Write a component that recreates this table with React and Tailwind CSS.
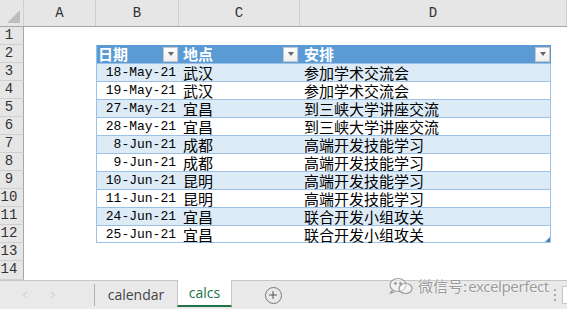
import { ChevronLeft, ChevronRight, Plus } from 'lucide-react'

const rows = [
  ['18-May-21', '武汉', '参加学术交流会'],
  ['19-May-21', '武汉', '参加学术交流会'],
  ['27-May-21', '宜昌', '到三峡大学讲座交流'],
  ['28-May-21', '宜昌', '到三峡大学讲座交流'],
  ['8-Jun-21', '成都', '高端开发技能学习'],
  ['9-Jun-21', '成都', '高端开发技能学习'],
  ['10-Jun-21', '昆明', '高端开发技能学习'],
  ['11-Jun-21', '昆明', '高端开发技能学习'],
  ['24-Jun-21', '宜昌', '联合开发小组攻关'],
  ['25-Jun-21', '宜昌', '联合开发小组攻关'],
]

const cjk = "font-['Noto_Sans_CJK_SC',sans-serif]"
const mono = "font-['Liberation_Mono','Noto_Sans_CJK_SC',monospace]"

function RowHead({ n }) {
  return (
    <div className={`w-[24px] shrink-0 h-full bg-[#e6e6e6] border-r border-r-[#a6a6a6] border-b border-b-[#cfcfcf] text-[14px] leading-[17px] text-[#333] text-center pr-[5px] ${mono}`}>
      {n}
    </div>
  )
}

function DropBtn() {
  return (
    <div className="w-[15px] h-[15px] border border-[#c8c8c8] bg-gradient-to-b from-white to-[#eeeeee] flex items-center justify-center shrink-0">
      <div className="w-0 h-0 border-l-[3px] border-r-[3px] border-t-[4px] border-l-transparent border-r-transparent border-t-[#666]" />
    </div>
  )
}

function Weixin() {
  return (
    <svg width="26" height="20" viewBox="0 0 26 20" fill="none" stroke="#9a9a9a" strokeWidth="1.2">
      <ellipse cx="10" cy="9" rx="8" ry="6.5" fill="#fff" fillOpacity="0.4" />
      <path d="M4.5 14.5 l-2.5 3 l4.5 -1.8" />
      <ellipse cx="17.5" cy="12.5" rx="6.5" ry="5" fill="#fff" fillOpacity="0.5" />
      <circle cx="7.5" cy="7.5" r="0.8" fill="#9a9a9a" />
      <circle cx="12.5" cy="7.5" r="0.8" fill="#9a9a9a" />
    </svg>
  )
}

export default function App() {
  return (
    <div className="w-[567px] h-[310px] bg-white overflow-hidden relative select-none">
      {/* Column headers */}
      <div className="flex h-[27px] bg-[#e6e6e6] border-b border-b-[#a6a6a6]">
        <div className="w-[24px] shrink-0 border-r border-r-[#cfcfcf] relative">
          <svg className="absolute right-[3px] bottom-[3px]" width="13" height="13"><polygon points="13,0 13,13 0,13" fill="#bdbdbd" /></svg>
        </div>
        {[['A', 'w-[72px]'], ['B', 'w-[83px]'], ['C', 'w-[121px]'], ['D', 'flex-1']].map(([l, w]) => (
          <div key={l} className={`${w} shrink-0 border-r border-r-[#cfcfcf] flex items-end justify-center pb-[2px] text-[14px] text-[#333] ${mono}`}>
            {l}
          </div>
        ))}
      </div>

      {/* Row 1 */}
      <div className="flex h-[18px]">
        <RowHead n={1} />
      </div>

      {/* Header row */}
      <div className="flex h-[18px]">
        <RowHead n={2} />
        <div className="w-[72px] shrink-0" />
        <div className="w-[455px] shrink-0 flex bg-[#5b9bd5] border-l border-l-[#9bc2e6] text-white font-bold text-[15px] leading-[18px]">
          <div className={`w-[82px] shrink-0 flex items-center justify-between pl-[1px] pr-[1px] ${cjk}`}>
            <span className="leading-[18px]">日期</span>
            <DropBtn />
          </div>
          <div className={`w-[121px] shrink-0 flex items-center justify-between pl-[4px] pr-[2px] ${cjk}`}>
            <span className="leading-[18px]">地点</span>
            <DropBtn />
          </div>
          <div className={`flex-1 flex items-center justify-between pl-[4px] pr-[1px] ${cjk}`}>
            <span className="leading-[18px]">安排</span>
            <DropBtn />
          </div>
        </div>
      </div>

      {/* Data rows */}
      {rows.map((r, i) => (
        <div key={i} className="flex h-[18px]">
          <RowHead n={i + 3} />
          <div className="w-[72px] shrink-0" />
          <div className={`w-[455px] shrink-0 flex border-l border-r border-[#9bc2e6] border-t border-t-[#9bc2e6] ${i === rows.length - 1 ? 'border-b border-b-[#9bc2e6]' : ''} ${i % 2 === 0 ? 'bg-[#ddebf7]' : 'bg-white'} relative`}>
            <div className={`w-[82px] shrink-0 text-right pr-[3px] text-[13px] leading-[17px] text-black ${mono}`}>{r[0]}</div>
            <div className={`w-[121px] shrink-0 pl-[4px] text-[15px] leading-[17px] text-black ${cjk}`}>{r[1]}</div>
            <div className={`flex-1 pl-[4px] text-[15px] leading-[17px] text-black ${cjk}`}>{r[2]}</div>
            {i === rows.length - 1 && (
              <svg className="absolute right-0 bottom-0" width="5" height="5"><polygon points="5,0 5,5 0,5" fill="#4a7fb8" /></svg>
            )}
          </div>
        </div>
      ))}

      {/* Rows 13, 14 */}
      <div className="flex h-[18px]">
        <RowHead n={13} />
      </div>
      <div className="flex h-[19px]">
        <RowHead n={14} />
      </div>

      {/* Sheet tabs */}
      <div className="flex items-stretch h-[29px] bg-[#e9e9e9] border-t border-t-[#c6c6c6] font-['Open_Sans',sans-serif]">
        <div className="w-[95px] shrink-0 flex items-center pl-[19px] gap-[16px] text-[#c4c4c4] border-r border-r-[#b0b0b0] my-[3px]">
          <ChevronLeft size={12} strokeWidth={2} />
          <ChevronRight size={12} strokeWidth={2} />
        </div>
        <div className="w-[82px] shrink-0 flex items-center justify-center text-[14px] text-[#444] pb-[2px]">
          calendar
        </div>
        <div className="w-[55px] shrink-0 -mt-px bg-white border-x border-x-[#c6c6c6] border-b-2 border-b-[#217346] flex items-center justify-center text-[14px] text-[#217346] pb-[1px] mb-[2px]">
          calcs
        </div>
        <div className="w-[82px] shrink-0 flex items-center justify-center">
          <div className="w-[17px] h-[17px] rounded-full border border-[#7a7a7a] flex items-center justify-center text-[#555]">
            <Plus size={12} strokeWidth={2} />
          </div>
        </div>
        <div className="flex-1" />
        <div className="w-[15px] flex flex-col items-center justify-center gap-[3px]">
          <div className="w-[2px] h-[2px] bg-[#aaa]" />
          <div className="w-[2px] h-[2px] bg-[#aaa]" />
          <div className="w-[2px] h-[2px] bg-[#aaa]" />
        </div>
        <div className="w-[5px] bg-white border-l border-y border-[#c6c6c6] my-[5px]" />
      </div>

      {/* Watermark */}
      <div className="absolute left-[388px] top-[276px] flex items-center gap-[4px] text-[#9a9a9a] text-[15px] leading-[20px] [text-shadow:0_0_2px_#fff,0_0_1px_#fff]">
        <Weixin />
        <span className={cjk}>微信号:</span>
        <span className="font-['Noto_Sans',sans-serif] -ml-[3px] tracking-[-0.4px]">excelperfect</span>
      </div>
    </div>
  )
}
